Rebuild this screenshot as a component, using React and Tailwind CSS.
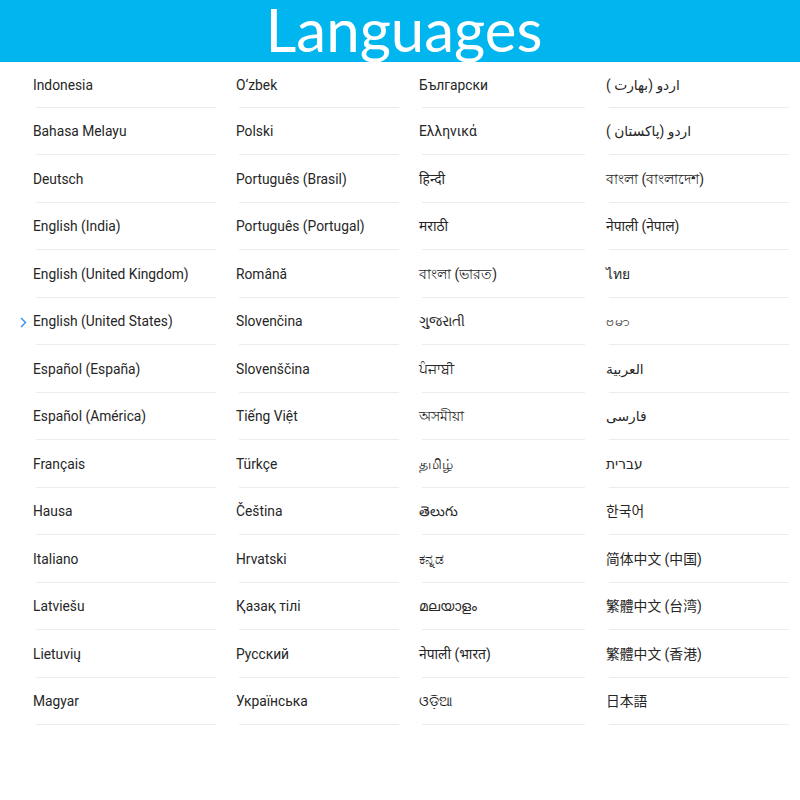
const columns = [
  {
    className: "ml-[33px] w-[183px]",
    items: [
      "Indonesia",
      "Bahasa Melayu",
      "Deutsch",
      "English (India)",
      "English (United Kingdom)",
      "English (United States)",
      "Español (España)",
      "Español (América)",
      "Français",
      "Hausa",
      "Italiano",
      "Latviešu",
      "Lietuvių",
      "Magyar",
    ],
  },
  {
    className: "ml-[20px] w-[163px]",
    items: [
      "O‘zbek",
      "Polski",
      "Português (Brasil)",
      "Português (Portugal)",
      "Română",
      "Slovenčina",
      "Slovenščina",
      "Tiếng Việt",
      "Türkçe",
      "Čeština",
      "Hrvatski",
      "Қазақ тілі",
      "Русский",
      "Українська",
    ],
  },
  {
    className: "ml-[20px] w-[166px]",
    items: [
      "Български",
      "Ελληνικά",
      "हिन्दी",
      "मराठी",
      "বাংলা (ভারত)",
      "ગુજરાતી",
      "ਪੰਜਾਬੀ",
      "অসমীয়া",
      "தமிழ்",
      "తెలుగు",
      "ಕನ್ನಡ",
      "മലയാളം",
      "नेपाली (भारत)",
      "ଓଡ଼ିଆ",
    ],
  },
  {
    className: "ml-[21px] w-[183px]",
    items: [
      { urdu: ["بھارت", "اردو"] },
      { urdu: ["پاکستان", "اردو"] },
      "বাংলা (বাংলাদেশ)",
      "नेपाली (नेपाल)",
      "ไทย",
      "ဗမာ",
      "العربية",
      "فارسی",
      "עברית",
      { text: "한국어", font: "font-['Roboto','Noto_Sans_CJK_KR',sans-serif]" },
      { text: "简体中文 (中国)", font: "font-['Roboto','Noto_Sans_CJK_SC',sans-serif]" },
      { text: "繁體中文 (台湾)", font: "font-['Roboto','Noto_Sans_CJK_TC',sans-serif]" },
      { text: "繁體中文 (香港)", font: "font-['Roboto','Noto_Sans_CJK_TC',sans-serif]" },
      { text: "日本語", font: "font-['Roboto','Noto_Sans_CJK_JP',sans-serif]" },
    ],
  },
];

function Row({ item, first, selected }) {
  const entry = typeof item === "string" ? { text: item } : item;
  return (
    <div className={`relative ${first ? "h-[45.5px]" : "h-[47.5px]"}`}>
      {selected && (
        <svg
          className="absolute left-[-13px] top-[calc(50%-4px)] w-[7px] h-[11px]"
          viewBox="0 0 7 11"
          fill="none"
          stroke="#2b8fe3"
          strokeWidth="1.4"
        >
          <polyline points="1,1 5.5,5.5 1,10" />
        </svg>
      )}
      <div
        className={`${first ? "h-[44.5px]" : "h-[46.5px]"} pt-[2px] flex items-center text-[13.8px] text-[#262626] ${entry.font || ""}`}
      >
        {entry.urdu ? (
          <div className="w-full">
            ( <bdi>{entry.urdu[0]}</bdi>) <bdi>{entry.urdu[1]}</bdi>
          </div>
        ) : (
          <div className="w-full">
            <bdi>{entry.text}</bdi>
          </div>
        )}
      </div>
      <div className="ml-[3px] h-px bg-[#ececec]" />
    </div>
  );
}

export default function App() {
  return (
    <div className="w-[800px] h-[800px] bg-white font-['Roboto','Noto_Sans','DejaVu_Sans',sans-serif]">
      {/* Title bar */}
      <div className="h-[62px] bg-[#01b5ee] flex items-center justify-center pl-2">
        <h1 className="font-['Lato',sans-serif] text-[60px] leading-[62px] text-white -mt-[4px]">
          Languages
        </h1>
      </div>

      {/* Language grid */}
      <div className="flex">
        {columns.map((col, ci) => (
          <div key={ci} className={`shrink-0 ${col.className}`}>
            {col.items.map((item, i) => (
              <Row key={i} item={item} first={i === 0} selected={ci === 0 && i === 5} />
            ))}
          </div>
        ))}
      </div>
    </div>
  );
}
